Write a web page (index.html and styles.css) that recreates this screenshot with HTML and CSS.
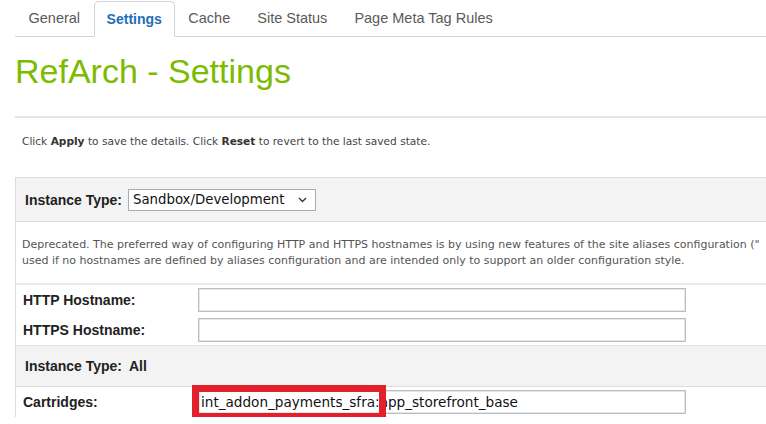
FILE: index.html
```html
<!DOCTYPE html>
<html lang="en">
<head>
    <meta charset="UTF-8">
    <meta name="viewport" content="width=device-width, initial-scale=1.0">
    <title>RefArch - Settings</title>
    <link rel="stylesheet" href="styles.css">
</head>
<body>

<div class="tabs">
    <a class="tab">General</a>
    <a class="tab active">Settings</a>
    <a class="tab">Cache</a>
    <a class="tab">Site Status</a>
    <a class="tab">Page Meta Tag Rules</a>
</div>

<h1 class="page-title">RefArch - Settings</h1>
<div class="divider"></div>

<p class="hint">Click <b>Apply</b> to save the details. Click <b>Reset</b> to revert to the last saved state.</p>

<div class="settings-box">
    <div class="box-header">
        <label for="instance-type">Instance Type:</label>
        <div class="select-wrap">
            <select id="instance-type" class="select-field">
                <option>Sandbox/Development</option>
                <option>Staging</option>
                <option>Production</option>
            </select>
            <svg class="chevron" width="9" height="6" viewBox="0 0 9 6"><path d="M1 1 L4.5 4.5 L8 1" fill="none" stroke="#333" stroke-width="1.3"/></svg>
        </div>
    </div>

    <div class="description">
        <span class="nowrap">Deprecated. The preferred way of configuring HTTP and HTTPS hostnames is by using new features of the site aliases configuration ("</span><br>
        used if no hostnames are defined by aliases configuration and are intended only to support an older configuration style.
    </div>

    <div class="form-row">
        <label for="http-host">HTTP Hostname:</label>
        <input type="text" id="http-host" class="text-field">
    </div>
    <div class="form-row">
        <label for="https-host">HTTPS Hostname:</label>
        <input type="text" id="https-host" class="text-field">
    </div>

    <div class="box-header section">
        <span class="section-label">Instance Type:</span>
        <span class="section-value">All</span>
    </div>

    <div class="form-row">
        <label for="cartridges">Cartridges:</label>
        <div class="field-wrap">
            <input type="text" id="cartridges" class="text-field" value="int_addon_payments_sfra:app_storefront_base">
            <!-- highlight annotation -->
            <div class="highlight"></div>
        </div>
    </div>
</div>

</body>
</html>
```

FILE: styles.css
```css
body {
    font-family: "Liberation Sans", Arial, sans-serif;
    background-color: #fff;
    color: #222;
    margin: 0;
    padding: 0;
    overflow: hidden;
}
.tabs {
    display: flex;
    margin-left: 15px;
    height: 37px;
    border-bottom: 1px solid #d4d4d4;
    box-sizing: border-box;
    padding-top: 1px;
}
.tab {
    padding: 0 13.5px;
    font-size: 14.5px;
    line-height: 35px;
    color: #5a5a5a;
    cursor: pointer;
}
.tab.active {
    padding: 0 12px;
    font-size: 14px;
    color: #1f6fb5;
    font-weight: bold;
    border: 1px solid #d4d4d4;
    border-bottom-color: #fff;
    border-radius: 5px 5px 0 0;
    background-color: #fff;
    height: 36px;
    box-sizing: border-box;
    margin-bottom: -1px;
}
.page-title {
    font-size: 34px;
    font-weight: normal;
    line-height: 39px;
    color: #7bbb00;
    margin: 15px 0 0 15px;
}
.divider {
    height: 2px;
    background-color: #e6e6e6;
    margin: 25px 0 0 15px;
}
.hint {
    font-family: "DejaVu Sans", Tahoma, sans-serif;
    font-size: 10.6px;
    line-height: 13px;
    color: #444;
    margin: 0;
    padding: 17px 0 0 22px;
}
.hint b {
    color: #333;
}
.settings-box {
    margin: 29px 0 0 15px;
    border-top: 1px solid #dcdcdc;
    border-left: 1px solid #dcdcdc;
}
.box-header {
    display: flex;
    align-items: center;
    height: 43px;
    padding-left: 9px;
    background-color: #f3f3f3;
    border-bottom: 1px solid #dcdcdc;
    font-size: 14px;
    font-weight: bold;
}
.box-header label {
    margin-right: 6px;
}
.select-wrap {
    position: relative;
}
.select-field {
    -webkit-appearance: none;
    appearance: none;
    width: 188px;
    height: 22px;
    padding: 0 0 0 4px;
    border: 1px solid #a9adb2;
    border-radius: 0;
    background-color: #fff;
    font-family: "DejaVu Sans", Tahoma, sans-serif;
    font-size: 13.3px;
    color: #111;
    display: block;
}
.chevron {
    position: absolute;
    right: 9px;
    top: 8px;
    pointer-events: none;
}
.description {
    font-family: "DejaVu Sans", Verdana, sans-serif;
    font-size: 11px;
    line-height: 16px;
    color: #555;
    padding: 15px 0 14px 6px;
    border-bottom: 2px solid #ebebeb;
    overflow: hidden;
}
.nowrap {
    white-space: nowrap;
}
.form-row {
    display: flex;
    align-items: center;
    height: 30px;
}
.form-row label {
    width: 175px;
    padding-left: 7px;
    font-size: 14px;
    font-weight: bold;
    color: #222;
}
.text-field {
    width: 488px;
    height: 24px;
    box-sizing: border-box;
    border: 1px solid #b9bec3;
    box-shadow: inset 0 0 0 1px #e4e6e8;
    padding: 0 2px;
    font-family: "DejaVu Sans", Tahoma, sans-serif;
    font-size: 13.6px;
    color: #111;
    display: block;
}
.box-header.section {
    height: 40px;
    border-top: 1px solid #e2e2e2;
    padding-left: 9px;
}
.section-value {
    margin-left: 7px;
}
.field-wrap {
    position: relative;
}
.highlight {
    position: absolute;
    left: -6px;
    top: -5px;
    width: 194px;
    height: 35px;
    border: 7px solid #e3202a;
    box-sizing: border-box;
    pointer-events: none;
}
```
